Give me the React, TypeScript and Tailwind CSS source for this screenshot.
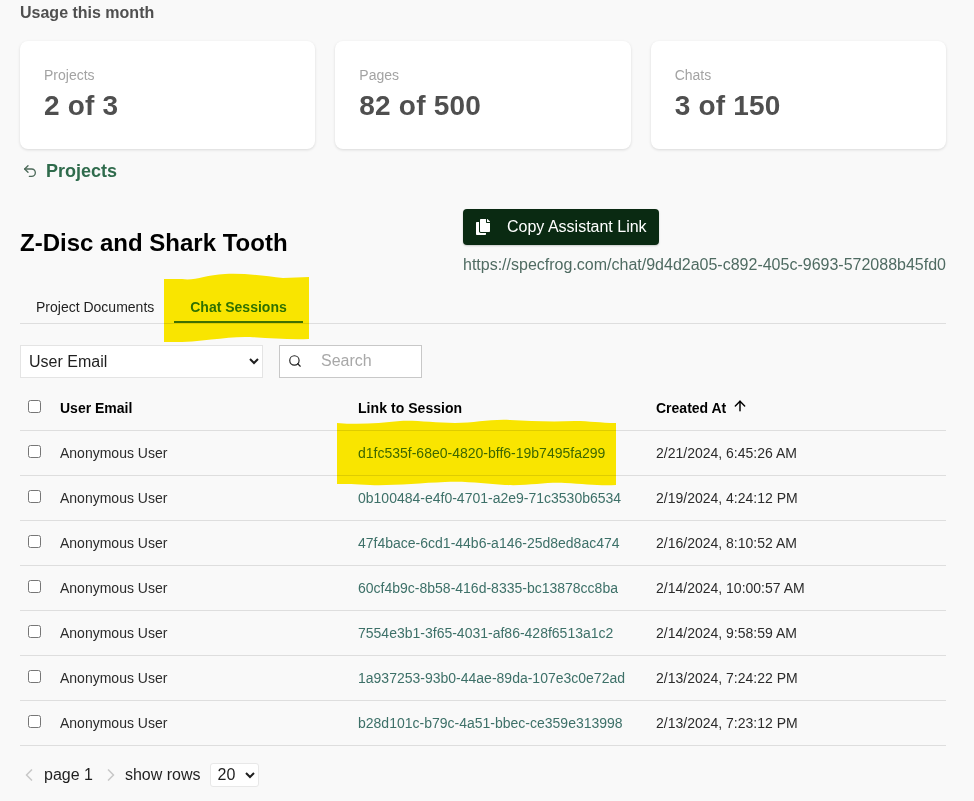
import React from "react";
import { FaCopy } from "react-icons/fa";
import { ArrowUp, ChevronLeft, ChevronRight, Search, Undo2 } from "lucide-react";

const rows = [
  ["d1fc535f-68e0-4820-bff6-19b7495fa299", "2/21/2024, 6:45:26 AM"],
  ["0b100484-e4f0-4701-a2e9-71c3530b6534", "2/19/2024, 4:24:12 PM"],
  ["47f4bace-6cd1-44b6-a146-25d8ed8ac474", "2/16/2024, 8:10:52 AM"],
  ["60cf4b9c-8b58-416d-8335-bc13878cc8ba", "2/14/2024, 10:00:57 AM"],
  ["7554e3b1-3f65-4031-af86-428f6513a1c2", "2/14/2024, 9:58:59 AM"],
  ["1a937253-93b0-44ae-89da-107e3c0e72ad", "2/13/2024, 7:24:22 PM"],
  ["b28d101c-b79c-4a51-bbec-ce359e313998", "2/13/2024, 7:23:12 PM"],
];

const cards = [
  ["Projects", "2 of 3"],
  ["Pages", "82 of 500"],
  ["Chats", "3 of 150"],
];

function Check() {
  return (
    <input
      type="checkbox"
      className="m-0 mb-[2px] block h-[13px] w-[13px] appearance-none rounded-[2.5px] border border-[#767676] bg-white"
    />
  );
}

export default function App() {
  return (
    <div className="relative h-[801px] w-[974px] overflow-hidden bg-[#f9f9f9] pl-5 pr-7 font-['Liberation_Sans',Arial,sans-serif] text-black">
      <h2 className="pt-[4px] text-[16px] leading-[17px] font-bold text-[#4f4f4f]">Usage this month</h2>

      <div className="mt-5 grid grid-cols-3 gap-5">
        {cards.map(([label, value]) => (
          <div key={label} className="h-[108px] rounded-lg bg-white pt-[26px] pl-6 shadow-[0_1px_3px_rgba(0,0,0,0.13)]">
            <div className="text-[14px] leading-4 text-[#a3a3a3]">{label}</div>
            <div className="mt-[7px] text-[28px] leading-8 font-bold tracking-[0.2px] text-[#4f4f4f]">{value}</div>
          </div>
        ))}
      </div>

      <div className="mt-[12px] flex h-5 items-center text-[#2f6b4c]">
        <Undo2 size={16} strokeWidth={2} className="ml-[2px] text-[#4d6a5a]" />
        <span className="ml-[8px] text-[18px] leading-5 font-bold">Projects</span>
      </div>

      <div className="mt-[28px] flex h-[74px] items-start">
        <h1 className="mt-[20px] w-[443px] text-[24px] leading-7 font-bold">Z-Disc and Shark Tooth</h1>
        <div>
          <button className="flex h-[36px] w-[196px] items-center rounded-[4px] bg-[#0a2a12] pl-3 text-[16px] text-white shadow-[0_1px_2px_rgba(0,0,0,0.2)]">
            <FaCopy size={16} />
            <span className="ml-[18px] -translate-x-[2px]">Copy Assistant Link</span>
          </button>
          <div className="mt-[10px] text-[16px] leading-5 whitespace-nowrap text-[#4f6b62]">
            https://specfrog.com/chat/9d4d2a05-c892-405c-9693-572088b45fd0
          </div>
        </div>
      </div>

      <div className="mt-[1px] flex h-[40px] border-b border-[#dedede]">
        <div className="w-[144px] pt-[15px] pl-[16px] text-[14px] leading-[16px] text-[#1f1f1f]">Project Documents</div>
        <div className="ml-[10px] h-[39px] w-[129px] border-b-2 border-[#3f7a00] pt-[15px] text-center text-[14px] leading-[16px] font-bold text-[#2f7a3c]">
          Chat Sessions
        </div>
      </div>

      <div className="mt-[21px] flex h-[33px] items-center">
        <select className="h-[33px] w-[243px] border border-[#e4e4e4] bg-white pl-[4px] text-[16px] text-[#1f1f1f]">
          <option>User Email</option>
        </select>
        <div className="ml-4 -mt-px flex h-[33px] w-[143px] items-center border border-[#c8c8c8] bg-white">
          <Search size={14} strokeWidth={2} className="ml-[8px] text-[#222]" />
          <span className="ml-[19px] text-[16px] text-[#a8a8a8]">Search</span>
        </div>
      </div>

      <table className="mt-[4px] w-full table-fixed border-collapse text-[14px]">
        <colgroup>
          <col className="w-[40px]" />
          <col className="w-[298px]" />
          <col className="w-[298px]" />
          <col />
        </colgroup>
        <thead>
          <tr className="h-[48px] border-b border-[#dedede] text-left">
            <th className="pt-[4px] pl-2 font-bold"><Check /></th>
            <th className="pt-[5px] text-[14px] font-bold">User Email</th>
            <th className="pt-[5px] text-[14px] font-bold tracking-[0.05px]">Link to Session</th>
            <th className="pt-[5px] text-[14px] font-bold">
              <span className="inline-flex items-center">
                Created At
                <ArrowUp size={16} strokeWidth={2.2} className="mb-[5px] ml-[6px]" />
              </span>
            </th>
          </tr>
        </thead>
        <tbody>
          {rows.map(([id, date]) => (
            <tr key={id} className="h-[45px] border-b border-[#dedede]">
              <td className="pl-2"><Check /></td>
              <td className="pt-[2px] text-[#2b2b2b]">Anonymous User</td>
              <td className="pt-[2px] text-[#3d7068]">{id}</td>
              <td className="pt-[2px] text-[#2b2b2b]">{date}</td>
            </tr>
          ))}
        </tbody>
      </table>

      <div className="mt-[17px] flex h-[24px] items-center text-[16px] text-[#1f1f1f]">
        <ChevronLeft size={20} strokeWidth={2} className="-ml-px text-[#c8c8c8]" />
        <span className="ml-[5px]">page 1</span>
        <ChevronRight size={20} strokeWidth={2} className="ml-[8px] text-[#c8c8c8]" />
        <span className="ml-[4px]">show rows</span>
        <select className="ml-[9px] h-[24px] w-[49px] rounded-[3px] border border-[#e8e8e8] bg-white pl-[3px] text-[16px]">
          <option>20</option>
        </select>
      </div>

      <svg className="pointer-events-none absolute top-0 left-0 mix-blend-multiply" width="974" height="801" viewBox="0 0 974 801">
        <path
          fill="#ffeb00"
          d="M164 279 L182 279 C195 281 205 275 225 274 C245 273 265 276 283 278 L309 277 L309 339 C290 340 270 338 250 337 C225 336 200 343 164 342 Z"
        />
        <path
          fill="#ffeb00"
          d="M337 423 C360 425 380 423 400 421 C415 420 435 423 455 423 C475 423 490 419 510 420 C530 421 550 422 575 421 C590 421 600 423 616 423 L616 485 C600 486 585 484 565 483 C545 482 530 486 505 485 C485 484 470 481 445 482 C420 483 390 486 370 485 C355 484 345 484 337 484 Z"
        />
      </svg>
    </div>
  );
}
